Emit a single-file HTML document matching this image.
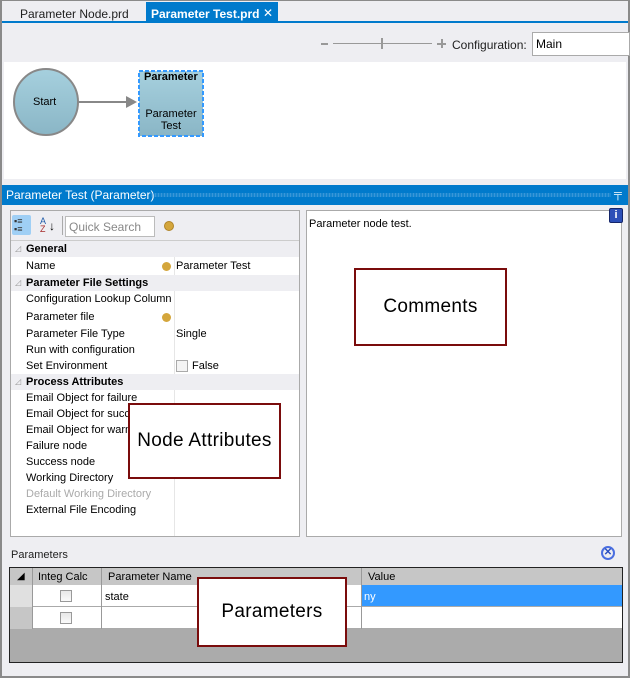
<!DOCTYPE html>
<html><head><meta charset="utf-8"><style>
*{margin:0;padding:0;box-sizing:border-box}
body{width:630px;height:678px;position:relative;overflow:hidden;background:#eeeef2;font-family:"Liberation Sans",Arial,sans-serif;font-size:12px;color:#000}
.a{position:absolute}
.t{position:absolute;white-space:nowrap;font-size:11px;line-height:16px}
.ann{position:absolute;background:#fff;border:2px solid #7a0c0c;display:flex;align-items:center;justify-content:center;font-size:19px;letter-spacing:0.3px}
.cb{position:absolute;width:12px;height:12px;border:1px solid #999;background:linear-gradient(#e8e8e8,#fafafa)}
</style></head><body>
<div class="a" style="left:0;top:0;width:630px;height:678px;border:2px solid #8a8a8a;border-top:1px solid #8a8a8a"></div>
<div class="t" style="left:20px;top:6px;color:#1e1e1e;font-size:12px">Parameter Node.prd</div>
<div class="a" style="left:146px;top:2px;width:132px;height:21px;background:#007acc"></div>
<div class="t" style="left:151px;top:6px;color:#fff;font-weight:bold;font-size:12px">Parameter Test.prd</div>
<div class="t" style="left:263px;top:5px;color:#fff;font-size:12px">✕</div>
<div class="a" style="left:2px;top:21px;width:626px;height:2px;background:#007acc"></div>
<div class="a" style="left:321px;top:43px;width:7px;height:2px;background:#999"></div>
<div class="a" style="left:333px;top:43px;width:99px;height:1px;background:#999"></div>
<div class="a" style="left:381px;top:38px;width:2px;height:11px;background:#999"></div>
<div class="a" style="left:437px;top:43px;width:9px;height:2px;background:#999"></div>
<div class="a" style="left:441px;top:39px;width:2px;height:9px;background:#999"></div>
<div class="t" style="left:452px;top:37px;font-size:12px;color:#1e1e1e">Configuration:</div>
<div class="a" style="left:532px;top:32px;width:98px;height:24px;background:#fff;border:1px solid #aaa"></div>
<div class="t" style="left:536px;top:36px;font-size:12px">Main</div>
<div class="a" style="left:4px;top:62px;width:622px;height:117px;background:#fff"></div>
<svg class="a" style="left:0;top:60px" width="220" height="100">
<defs><linearGradient id="g" x1="0" y1="0" x2="0" y2="1"><stop offset="0" stop-color="#a6d0de"/><stop offset="1" stop-color="#8ab6c6"/></linearGradient></defs>
<ellipse cx="46" cy="42" rx="32" ry="33" fill="url(#g)" stroke="#888" stroke-width="2"/>
<line x1="79" y1="42" x2="128" y2="42" stroke="#888" stroke-width="2"/>
<polygon points="126,36 137,42 126,48" fill="#888"/>
<rect x="139" y="11" width="64" height="65" fill="url(#g)" stroke="#3399ff" stroke-width="2" stroke-dasharray="4,2"/>
</svg>
<div class="t" style="left:33px;top:94px;font-size:11px">Start</div>
<div class="t" style="left:144px;top:69px;font-size:11px;font-weight:bold">Parameter</div>
<div class="t" style="left:145px;top:108px;font-size:11px;line-height:12px;text-align:center;width:52px">Parameter<br>Test</div>
<div class="a" style="left:2px;top:185px;width:626px;height:20px;background:#007acc"></div>
<div class="t" style="left:6px;top:187px;color:#fff;font-size:12px">Parameter Test (Parameter)</div>
<div class="a" style="left:151px;top:193px;width:460px;height:4px;background-image:radial-gradient(#6fb3e3 0.8px,transparent 1px);background-size:3px 2px"></div>
<div class="t" style="left:614px;top:186px;color:#fff;font-size:11px;font-weight:bold">╤</div>
<div class="a" style="left:10px;top:210px;width:290px;height:327px;background:#fff;border:1px solid #aaa"></div>
<div class="a" style="left:11px;top:211px;width:288px;height:29px;background:#eeeef2"></div>
<div class="a" style="left:12px;top:215px;width:19px;height:20px;background:#9fcff5;border-radius:2px"></div>
<div class="t" style="left:14px;top:217px;font-size:9px;line-height:8px;color:#333">▪≡<br>▪≡</div>
<div class="t" style="left:40px;top:217px;font-size:9px;line-height:8px;color:#1e5aa8">A<br><span style="color:#a52a2a">Z</span></div>
<div class="t" style="left:49px;top:218px;font-size:12px">↓</div>
<div class="a" style="left:62px;top:216px;width:1px;height:19px;background:#aaa"></div>
<div class="a" style="left:65px;top:216px;width:90px;height:21px;background:#fff;border:1px solid #bbb"></div>
<div class="t" style="left:69px;top:219px;color:#888;font-size:12px">Quick Search</div>
<div class="a" style="left:164px;top:221px;width:10px;height:10px;border-radius:50%;background:#d4a63c;border:1px solid #b08428"></div>
<div class="a" style="left:11px;top:240px;width:288px;height:1px;background:#ccc"></div>
<div class="a" style="left:174px;top:290px;width:1px;height:246px;background:#e6e6e6"></div>
<div class="a" style="left:174px;top:257px;width:1px;height:18px;background:#e6e6e6"></div>
<div class="a" style="left:11px;top:241px;width:288px;height:16px;background:#eeeef2"></div>
<div class="a" style="left:11px;top:275px;width:288px;height:16px;background:#eeeef2"></div>
<div class="a" style="left:11px;top:374px;width:288px;height:16px;background:#eeeef2"></div>
<div class="t" style="left:15px;top:241px;color:#999;font-size:8px">◿</div>
<div class="t" style="left:15px;top:275px;color:#999;font-size:8px">◿</div>
<div class="t" style="left:15px;top:374px;color:#999;font-size:8px">◿</div>
<div class="t" style="left:26px;top:241px;font-weight:bold">General</div>
<div class="t" style="left:26px;top:258px">Name</div>
<div class="a" style="left:162px;top:262px;width:9px;height:9px;border-radius:50%;background:#d4a63c"></div>
<div class="t" style="left:176px;top:258px">Parameter Test</div>
<div class="t" style="left:26px;top:275px;font-weight:bold">Parameter File Settings</div>
<div class="t" style="left:26px;top:291px">Configuration Lookup Column</div>
<div class="t" style="left:26px;top:309px">Parameter file</div>
<div class="a" style="left:162px;top:313px;width:9px;height:9px;border-radius:50%;background:#d4a63c"></div>
<div class="t" style="left:26px;top:326px">Parameter File Type</div>
<div class="t" style="left:176px;top:326px">Single</div>
<div class="t" style="left:26px;top:342px">Run with configuration</div>
<div class="t" style="left:26px;top:358px">Set Environment</div>
<div class="a" style="left:176px;top:360px;width:12px;height:12px;border:1px solid #aaa;background:#f4f4f4"></div>
<div class="t" style="left:192px;top:358px">False</div>
<div class="t" style="left:26px;top:374px;font-weight:bold">Process Attributes</div>
<div class="t" style="left:26px;top:390px">Email Object for failure</div>
<div class="t" style="left:26px;top:406px">Email Object for success</div>
<div class="t" style="left:26px;top:422px">Email Object for warning</div>
<div class="t" style="left:26px;top:438px">Failure node</div>
<div class="t" style="left:26px;top:454px">Success node</div>
<div class="t" style="left:26px;top:470px">Working Directory</div>
<div class="t" style="left:26px;top:486px;color:#aaa">Default Working Directory</div>
<div class="t" style="left:26px;top:502px">External File Encoding</div>
<div class="a" style="left:306px;top:210px;width:316px;height:327px;background:#fff;border:1px solid #aaa"></div>
<div class="t" style="left:309px;top:216px;font-size:11px">Parameter node test.</div>
<div class="a" style="left:609px;top:208px;width:14px;height:15px;background:#2c4fb8;border:1px solid #15266a;border-radius:2px;color:#fff;font-size:11px;font-weight:bold;text-align:center;line-height:13px">i</div>
<div class="t" style="left:11px;top:547px;font-size:11px;color:#1e1e1e">Parameters</div>
<div class="a" style="left:601px;top:546px;width:14px;height:14px;border-radius:50%;border:2px solid #4a6ee0;color:#2a4ec0;font-size:10px;font-weight:bold;text-align:center;line-height:10px">✕</div>
<div class="a" style="left:9px;top:567px;width:614px;height:96px;background:#ababab;border:1px solid #222"></div>
<div class="a" style="left:10px;top:568px;width:612px;height:17px;background:#c6c6c6"></div>
<div class="a" style="left:10px;top:585px;width:22px;height:44px;background:#e0e0e0"></div>
<div class="a" style="left:10px;top:607px;width:22px;height:22px;background:#c6c6c6"></div>
<div class="a" style="left:32px;top:585px;width:590px;height:44px;background:#fff"></div>
<div class="a" style="left:361px;top:585px;width:261px;height:22px;background:#3399ff"></div>
<div class="a" style="left:32px;top:606px;width:590px;height:1px;background:#aaa"></div>
<div class="a" style="left:32px;top:628px;width:590px;height:1px;background:#aaa"></div>
<div class="a" style="left:32px;top:568px;width:1px;height:61px;background:#999"></div>
<div class="a" style="left:101px;top:568px;width:1px;height:61px;background:#999"></div>
<div class="a" style="left:361px;top:568px;width:1px;height:61px;background:#999"></div>
<div class="t" style="left:17px;top:569px;font-size:10px">◢</div>
<div class="t" style="left:38px;top:569px;font-size:11px">Integ Calc</div>
<div class="t" style="left:108px;top:569px;font-size:11px">Parameter Name</div>
<div class="t" style="left:368px;top:569px;font-size:11px">Value</div>
<div class="cb" style="left:60px;top:590px"></div>
<div class="cb" style="left:60px;top:612px"></div>
<div class="t" style="left:105px;top:589px;font-size:11px">state</div>
<div class="t" style="left:364px;top:589px;font-size:11px;color:#fff">ny</div>
<div class="ann" style="left:128px;top:403px;width:153px;height:76px">Node Attributes</div>
<div class="ann" style="left:354px;top:268px;width:153px;height:78px">Comments</div>
<div class="ann" style="left:197px;top:577px;width:150px;height:70px">Parameters</div>
</body></html>
